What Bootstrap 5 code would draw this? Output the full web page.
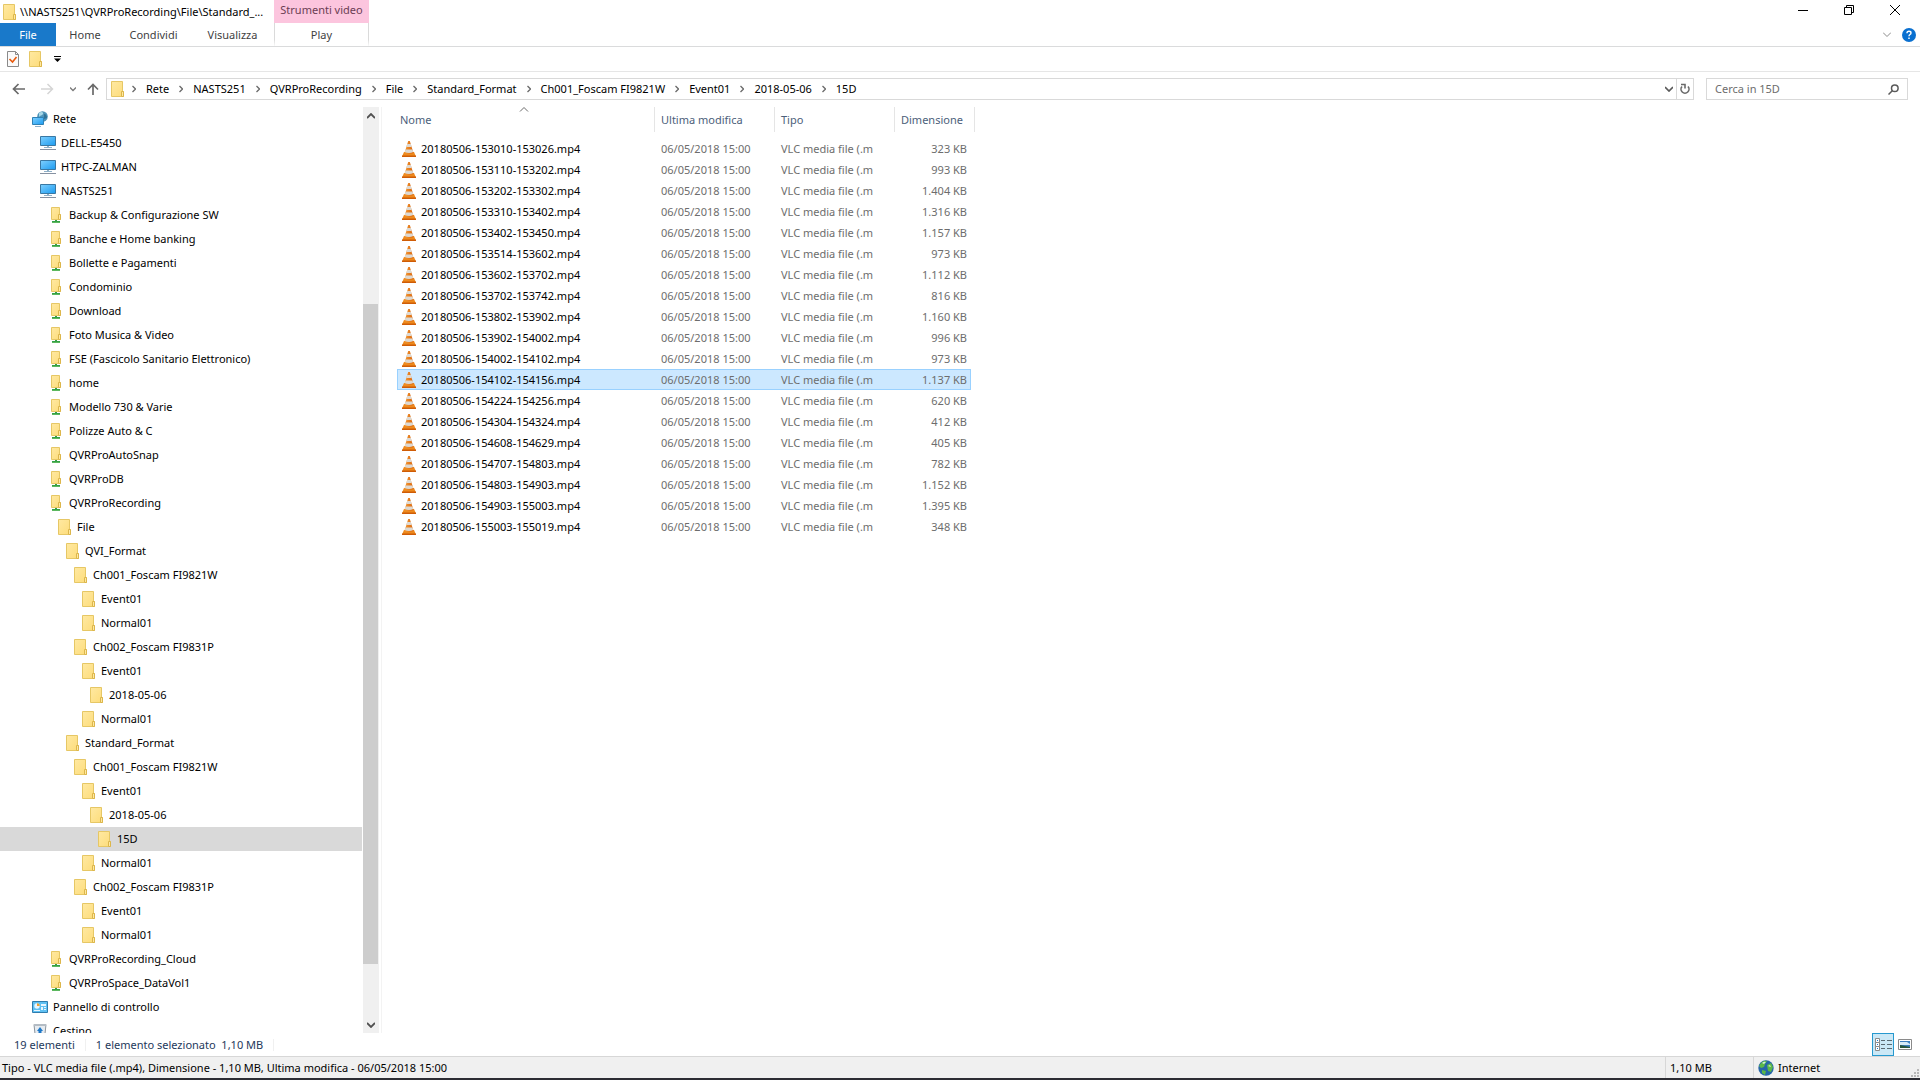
<!DOCTYPE html>
<html lang="it">
<head>
<meta charset="utf-8">
<meta name="viewport" content="width=device-width, initial-scale=1">
<title>15D</title>
<link href="https://cdn.jsdelivr.net/npm/bootstrap@5.3.0/dist/css/bootstrap.min.css" rel="stylesheet">
<style>
  body { font-family: "Noto Sans", "Open Sans", sans-serif; font-size: 11px; line-height: 16px; color: #000; background: #fff; }
  svg { display: block; flex: none; }
  button, input { font: inherit; color: inherit; }
  a { color: inherit; text-decoration: none; }
  .plain-btn { border: 0; background: none; padding: 0; display: flex; align-items: center; justify-content: center; }

  .title-row { height: 23px; }
  .title-main { width: 274px; padding-left: 1px; gap: 3px; }
  .tool-group { width: 95px; padding-bottom: 3px; background: #fcc5de; color: #6b3d54; }
  .win-group { padding-right: 2px; }
  .win-btn { width: 46px; height: 20px; }
  .ribbon-row { height: 24px; border-bottom: 1px solid #dadbdc; color: #3f3f3f; }
  .ribbon-row a { display: flex; align-items: center; justify-content: center; height: 23px; }
  .ribbon-tools { gap: 11px; }
  .tab-file { width: 56px; background: #1979ca; color: #fff; }
  .tab-home { width: 58px; }
  .tab-share { width: 79px; }
  .tab-view { width: 79px; }
  .tab-play { width: 95px; margin-left: 2px; border: 1px solid; border-width: 0 1px; border-image: linear-gradient(#dadada 70%, #fff) 1; }
  .quick-row { height: 25px; border-bottom: 1px solid #e6e6e6; padding-left: 7px; gap: 8px; }
  .quick-more { margin-left: 3px; }

  .address-row { height: 35px; padding: 0 12px 1px; }
  .address-row nav { height: 22px; border: 1px solid #d9d9d9; }
  .btn-up { margin: 0 7px 0 11px; }
  .crumbs { gap: 10px; padding-left: 7px; }
  .btn-drop { margin-right: 3px; }
  .refresh { width: 17px; height: 20px; border-left: 1px solid #d9d9d9; }
  .search-box { width: 202px; height: 22px; border: 1px solid #d9d9d9; margin-left: 12px; padding: 0 8px; }
  .search-box input { border: 0; outline: 0; padding: 0; min-width: 0; }
  .search-box input::placeholder { color: #6d6d6d; opacity: 1; }

  .tree-pane { width: 382px; border-right: 1px solid #f3f3f3; }
  .tree { width: 362px; margin-right: 1px; overflow: hidden; }
  .tree a { display: flex; align-items: center; height: 24px; gap: 5px; white-space: nowrap; }
  .tree a.current { background: #d9d9d9; }
  .scroller { width: 16px; background: #f0f0f0; }
  .scroller button { height: 17px; width: 15px; }
  .scroller .gap-top { height: 180px; }
  .scroller .thumb { height: 660px; width: 15px; background: #cdcdcd; }

  .files { table-layout: fixed; width: 578px; margin-left: 15px; border-collapse: separate; border-spacing: 0; }
  .files th { height: 25px; font-weight: 400; color: #4c607a; border-right: 1px solid #e5e5e5; padding: 0 6px; position: relative; }
  .files th:first-child { padding-left: 3px; }
  .files .sort-mark { position: absolute; left: 122px; top: 0; }
  .files tbody::before { content: ""; display: block; height: 6px; }
  .files td { height: 21px; line-height: 19px; padding: 0 6px; color: #6d6d6d; white-space: nowrap; border: 1px solid transparent; border-width: 1px 0; }
  .files td:first-child { padding-left: 5px; color: #000; }
  .files td:nth-child(4) { text-align: right; padding-right: 4px; }
  .files .picked td:nth-child(-n+4) { background: #cce8ff; border-color: #99d1ff; }
  .files .picked td:first-child { border-left-width: 1px; padding-left: 4px; }
  .files .picked td:nth-child(4) { border-right-width: 1px; padding-right: 3px; }
  .file-name { gap: 5px; }

  .count-row { height: 23px; color: #1e395b; padding-left: 14px; }
  .count-row .cell-sep { border-left: 1px solid #f0f0f0; height: 12px; margin: 0 10px; }
  .view-btn { height: 23px; width: 22px; }
  .view-btn.active { background: #cbe8f6; border: 1px solid #2699cf; }
  .info-row { height: 22px; background: #f0f0f0; border-top: 1px solid #d7d7d7; }
  .info-text { padding-left: 2px; }
  .info-size { width: 88px; border-left: 1px solid #d7d7d7; padding-left: 4px; }
  .info-zone { width: 167px; border-left: 1px solid #d7d7d7; padding-left: 4px; gap: 4px; }
  .edge { height: 2px; background: #2c2c33; }
</style>
</head>
<body class="vh-100 d-flex flex-column overflow-hidden">

<svg width="0" height="0" class="position-absolute" aria-hidden="true">
  <defs>
    <linearGradient id="gFold" x1="0" y1="0" x2="1" y2="1"><stop offset="0" stop-color="#ffe9a2"/><stop offset="1" stop-color="#fddc7a"/></linearGradient>
    <linearGradient id="gScr" x1="0" y1="0" x2="1" y2="1"><stop offset="0" stop-color="#7fd0ff"/><stop offset="1" stop-color="#1b9bf0"/></linearGradient>
    <linearGradient id="gCone" x1="0" y1="0" x2="1" y2="0"><stop offset="0" stop-color="#f59a35"/><stop offset="1" stop-color="#d9640b"/></linearGradient>
    <symbol id="folder" viewBox="0 0 16 16"><path d="M2.500.5h11v10h1v5h-12z" fill="url(#gFold)" stroke="#e6c765"/><path d="M12.500 15.500v-5h2v5z" fill="#ffe9a2" stroke="#dcb64c"/></symbol>
    <symbol id="share" viewBox="0 0 16 16"><path d="M7 12h2v2h3v2H4v-2h3z" fill="#35a045"/><path d="M3.500.5h8v7h1v5h-9z" fill="url(#gFold)" stroke="#e6c765"/><path d="M10.500 12.500v-5h2v5z" fill="#ffe9a2" stroke="#dcb64c"/><path d="M4 15h8v1H4z" fill="#5cb860"/></symbol>
    <symbol id="pc" viewBox="0 0 16 16"><path d="M.5 1.500h15v9H.5z" fill="url(#gScr)" stroke="#3a78a3"/><path d="M7 11h2v1h3v1H4v-1h3z" fill="#8fb0c8"/><path d="M0 14.500h16" stroke="#8792a2"/></symbol>
    <symbol id="network" viewBox="0 0 16 16"><circle cx="10.500" cy="5.500" r="5.300" fill="#4d93b8"/><path d="M7 2c2-2 5-1 4 1s-3 1-4 3z" fill="#a8d8e8"/><path d="M12 3c2 0 3 2 3 4l-3 1z" fill="#2f7196"/><path d="M.5 6.500h11v7H.5z" fill="url(#gScr)" stroke="#2f81b5"/><path d="M3 15.500h6" stroke="#8fb0c8"/></symbol>
    <symbol id="panel" viewBox="0 0 16 16"><path d="M.5 2.500h15v11H.5z" fill="#5fc0f2" stroke="#2f7dae"/><circle cx="5" cy="7" r="2.700" fill="#e8f6ff"/><path d="M5 7V4.300A2.700 2.700 0 0 1 7.700 7z" fill="#f0a030"/><path d="M9 5h5v2H9zM9 8h2v3H9zM12 8h2v1h-2zM12 10h2v1h-2zM2 11h6v1H2z" fill="#e8f6ff"/></symbol>
    <symbol id="bin" viewBox="0 0 16 16"><path d="M2 1.500h12l-1.500 14h-9z" fill="#e6ebf0" stroke="#8a949e"/><path d="M2 1h12v2H2z" fill="#b4bcc4"/><path d="M8 4l3 4H9.500v3h-3V8H5z" fill="#1e78c8"/></symbol>
    <symbol id="cone" viewBox="0 0 14 16"><path d="M2 11h10l2 4.500H0z" fill="#ee8a1d"/><path d="M0 14.500h14v1.500H0z" fill="#cf5c06"/><path d="M6.200 0h1.600L11.500 12q-4.500 2-9 0z" fill="url(#gCone)"/><path d="M5.200 3h3.600l.9 3H4.300zM3.500 8.500h7l.8 2.500q-4.300 2-8.600 0z" fill="#ddd9d2"/></symbol>
    <symbol id="crumb" viewBox="0 0 4 8"><path d="M.5 1l3 3-3 3" fill="none" stroke="#6a6a6a" stroke-width="1.300"/></symbol>
    <symbol id="globe" viewBox="0 0 16 16"><circle cx="8" cy="8" r="7.700" fill="#2566a8"/><path d="M3 3q3-3 6-2L7 4 6 7 3 8 1 6zM9 5l4-2 2 4-2 5-3-1zM4 10l4 1-1 4-3-2z" fill="#5cb848"/><path d="M4 3q2-2 4-1L6 4zM10 6l2-1 1 2z" fill="#d2f0d8"/></symbol>
  </defs>
</svg>

<header>
  <div class="title-row d-flex">
    <div class="title-main d-flex align-items-center text-nowrap"><svg width="16" height="16"><use href="#folder"/></svg><span>\\NASTS251\QVRProRecording\File\Standard_...</span></div>
    <div class="tool-group d-flex align-items-center justify-content-center text-nowrap">Strumenti video</div>
    <div class="win-group ms-auto d-flex">
      <button class="plain-btn win-btn" aria-label="Riduci a icona"><svg width="10" height="10"><path d="M0 5.500h10" stroke="#000"/></svg></button>
      <button class="plain-btn win-btn" aria-label="Ripristino"><svg width="10" height="10" fill="none" stroke="#000"><path d="M.5 2.500h7v7h-7zM2.500 2.500v-2h7v7h-2"/></svg></button>
      <button class="plain-btn win-btn" aria-label="Chiudi"><svg width="10" height="10"><path d="M0 0l10 10M10 0L0 10" stroke="#000"/></svg></button>
    </div>
  </div>
  <nav class="ribbon-row d-flex" aria-label="Barra multifunzione">
    <a href="#" class="tab-file">File</a><a href="#" class="tab-home">Home</a><a href="#" class="tab-share">Condividi</a><a href="#" class="tab-view">Visualizza</a><a href="#" class="tab-play">Play</a>
    <div class="ribbon-tools ms-auto d-flex align-items-center pe-1">
      <button class="plain-btn" aria-label="Espandi"><svg width="8" height="5"><path d="M0 .5l4 4 4-4" fill="none" stroke="#8a8a8a"/></svg></button>
      <button class="plain-btn rounded-circle" aria-label="Guida"><svg width="14" height="14"><circle cx="7" cy="7" r="7" fill="#0a70d0"/><path d="M5 5.200q0-2 2-2t2 1.700q0 1-1 1.600T7 8.200M7 9.500v1.500" fill="none" stroke="#fff" stroke-width="1.400"/></svg></button>
    </div>
  </nav>
  <div class="quick-row d-flex align-items-center">
    <button class="plain-btn" aria-label="Proprietà"><svg width="12" height="16"><path d="M.5.500h8l3 3v12H.5z" fill="#fafafa" stroke="#8a8a8a"/><path d="M8.500.500v3h3" fill="none" stroke="#8a8a8a"/><path d="M2.500 8l3 3 4-5" fill="none" stroke="#e8590c" stroke-width="1.600"/></svg></button>
    <button class="plain-btn" aria-label="Nuova cartella"><svg width="16" height="16"><use href="#folder"/></svg></button>
    <button class="plain-btn quick-more" aria-label="Personalizza"><svg width="7" height="6"><path d="M0 .5h7" stroke="#000"/><path d="M0 2.500h7L3.500 6z"/></svg></button>
  </div>
  <div class="address-row d-flex align-items-center">
    <button class="plain-btn" aria-label="Indietro"><svg width="13" height="12" fill="none" stroke="#6a6a6a" stroke-width="1.700"><path d="M13 6H1.500M6.500 1l-5 5 5 5"/></svg></button>
    <button class="plain-btn ms-3" aria-label="Avanti"><svg width="13" height="12" fill="none" stroke="#d5d5d5" stroke-width="1.500"><path d="M0 6h11.500M6.500 1l5 5-5 5"/></svg></button>
    <button class="plain-btn ms-3" aria-label="Percorsi recenti"><svg width="6" height="5"><path d="M0 .5l3 3 3-3" fill="none" stroke="#7a7a7a" stroke-width="1.300"/></svg></button>
    <button class="plain-btn btn-up" aria-label="Su"><svg width="12" height="12" fill="none" stroke="#6a6a6a" stroke-width="1.700"><path d="M6 12V1.500M1 6.500l5-5 5 5"/></svg></button>
    <nav class="flex-grow-1 d-flex align-items-center ps-1" aria-label="Percorso">
      <svg width="14" height="16" viewBox="2 0 14 16"><use href="#folder" width="16" height="16"/></svg>
      <div class="crumbs d-flex align-items-center text-nowrap" id="crumbs"></div>
      <button class="plain-btn btn-drop ms-auto" aria-label="Percorsi precedenti"><svg width="8" height="6"><path d="M0 1l4 4 4-4" fill="none" stroke="#5a5a5a" stroke-width="1.700"/></svg></button>
      <button class="plain-btn refresh" aria-label="Aggiorna"><svg width="10" height="12" fill="none" stroke="#6a6a6a" stroke-width="1.600"><path d="M2 3.500a4 4 0 1 0 6 0M1 1.500h4v4"/></svg></button>
    </nav>
    <form class="search-box d-flex align-items-center" onsubmit="return false">
      <input type="search" class="flex-grow-1" placeholder="Cerca in 15D" aria-label="Cerca in 15D">
      <svg width="11" height="11" fill="none" stroke="#5a5a5a" stroke-width="1.500"><circle cx="6.800" cy="4.200" r="3.300"/><path d="M4.500 6.500L.5 10.500"/></svg>
    </form>
  </div>
</header>

<main class="flex-grow-1 d-flex overflow-hidden">
  <aside class="tree-pane d-flex flex-shrink-0">
    <nav class="tree" id="tree" aria-label="Riquadro di spostamento"></nav>
    <div class="scroller d-flex flex-column">
      <button class="plain-btn" aria-label="Scorri su"><svg width="8" height="6"><path d="M0 5l4-4 4 4" fill="none" stroke="#505050" stroke-width="1.800"/></svg></button>
      <div class="gap-top"></div>
      <div class="thumb"></div>
      <button class="plain-btn mt-auto" aria-label="Scorri giù"><svg width="8" height="6"><path d="M0 1l4 4 4-4" fill="none" stroke="#505050" stroke-width="1.800"/></svg></button>
    </div>
  </aside>
  <section class="flex-grow-1">
    <table class="files">
      <colgroup><col style="width:258px"><col style="width:120px"><col style="width:120px"><col style="width:76px"><col style="width:4px"></colgroup>
      <thead><tr><th scope="col">Nome<svg class="sort-mark" width="10" height="5"><path d="M1 4.500l4-4 4 4" fill="none" stroke="#6a6a6a"/></svg></th><th scope="col">Ultima modifica</th><th scope="col">Tipo</th><th scope="col" colspan="2">Dimensione</th></tr></thead>
      <tbody id="rows"></tbody>
    </table>
  </section>
</main>

<footer>
  <div class="count-row d-flex align-items-center">
    <span>19 elementi</span><span class="cell-sep"></span><span>1 elemento selezionato&nbsp; 1,10 MB</span><span class="cell-sep"></span>
    <div class="ms-auto d-flex align-items-center gap-1 pe-2">
      <button class="plain-btn view-btn active" aria-label="Dettagli"><svg width="17" height="13" fill="none"><path d="M.5.500h4v4h-4zM.5 4.500h4v4h-4zM.5 8.500h4v4h-4z" fill="#fff" stroke="#8a8a8a"/><path d="M6 2.500h4m2 0h5M6 6.500h4m2 0h5M6 10.500h4m2 0h5" stroke="#5a6a72"/><path d="M2 2.500h1M2 6.500h1M2 10.500h1" stroke="#1979ca"/></svg></button>
      <button class="plain-btn" aria-label="Icone grandi"><svg width="14" height="11"><path d="M.5.500h13v10H.5z" fill="#fff" stroke="#8a8a8a"/><path d="M2 2h10v7H2z" fill="#3b7fc0"/><path d="M2 3h7l3 2v1H2z" fill="#d6ebf8"/><path d="M2 6l5 1 5 1v1H2z" fill="#27563c"/></svg></button>
    </div>
  </div>
  <div class="info-row d-flex">
    <div class="flex-grow-1 d-flex align-items-center info-text">Tipo - VLC media file (.mp4), Dimensione - 1,10 MB, Ultima modifica - 06/05/2018 15:00</div>
    <div class="info-size d-flex align-items-center">1,10 MB</div>
    <div class="info-zone d-flex align-items-center"><svg width="16" height="16"><use href="#globe"/></svg><span>Internet</span>
      <svg class="ms-auto align-self-end" width="10" height="10" fill="#b8b8b8"><path d="M7 1h2v2H7zM4 4h2v2H4zM7 4h2v2H7zM1 7h2v2H1zM4 7h2v2H4zM7 7h2v2H7z"/></svg></div>
  </div>
  <div class="edge"></div>
</footer>

<script>
  const crumbs = ["Rete", "NASTS251", "QVRProRecording", "File", "Standard_Format", "Ch001_Foscam FI9821W", "Event01", "2018-05-06", "15D"];
  document.getElementById("crumbs").innerHTML = crumbs.map(c =>
    `<svg width="4" height="8"><use href="#crumb"/></svg><a href="#">${c}</a>`).join("");

  // [level, icon, label]
  const tree = [
    [0, "network", "Rete"], [1, "pc", "DELL-E5450"], [1, "pc", "HTPC-ZALMAN"], [1, "pc", "NASTS251"],
    [2, "share", "Backup &amp; Configurazione SW"], [2, "share", "Banche e Home banking"], [2, "share", "Bollette e Pagamenti"],
    [2, "share", "Condominio"], [2, "share", "Download"], [2, "share", "Foto Musica &amp; Video"],
    [2, "share", "FSE (Fascicolo Sanitario Elettronico)"], [2, "share", "home"], [2, "share", "Modello 730 &amp; Varie"],
    [2, "share", "Polizze Auto &amp; C"], [2, "share", "QVRProAutoSnap"], [2, "share", "QVRProDB"], [2, "share", "QVRProRecording"],
    [3, "folder", "File"], [4, "folder", "QVI_Format"], [5, "folder", "Ch001_Foscam FI9821W"], [6, "folder", "Event01"],
    [6, "folder", "Normal01"], [5, "folder", "Ch002_Foscam FI9831P"], [6, "folder", "Event01"], [7, "folder", "2018-05-06"],
    [6, "folder", "Normal01"], [4, "folder", "Standard_Format"], [5, "folder", "Ch001_Foscam FI9821W"], [6, "folder", "Event01"],
    [7, "folder", "2018-05-06"], [8, "folder", "15D"], [6, "folder", "Normal01"], [5, "folder", "Ch002_Foscam FI9831P"],
    [6, "folder", "Event01"], [6, "folder", "Normal01"], [2, "share", "QVRProRecording_Cloud"], [2, "share", "QVRProSpace_DataVol1"],
    [0, "panel", "Pannello di controllo"], [0, "bin", "Cestino"]
  ];
  document.getElementById("tree").innerHTML = tree.map(([lv, icon, label]) =>
    `<a href="#"${label === "15D" ? ' class="current"' : ""} style="padding-left:${32 + lv * 8}px"><svg width="16" height="16"><use href="#${icon}"/></svg><span>${label}</span></a>`).join("");

  const files = [
    ["153010-153026", "323"], ["153110-153202", "993"], ["153202-153302", "1.404"], ["153310-153402", "1.316"],
    ["153402-153450", "1.157"], ["153514-153602", "973"], ["153602-153702", "1.112"], ["153702-153742", "816"],
    ["153802-153902", "1.160"], ["153902-154002", "996"], ["154002-154102", "973"], ["154102-154156", "1.137"],
    ["154224-154256", "620"], ["154304-154324", "412"], ["154608-154629", "405"], ["154707-154803", "782"],
    ["154803-154903", "1.152"], ["154903-155003", "1.395"], ["155003-155019", "348"]
  ];
  document.getElementById("rows").innerHTML = files.map(([span, kb]) =>
    `<tr${span === "154102-154156" ? ' class="picked"' : ""}><td><div class="file-name d-flex align-items-center"><svg width="14" height="16"><use href="#cone"/></svg><span>20180506-${span}.mp4</span></div></td><td>06/05/2018 15:00</td><td>VLC media file (.m</td><td>${kb} KB</td><td></td></tr>`).join("");
</script>
<script src="https://cdn.jsdelivr.net/npm/bootstrap@5.3.0/dist/js/bootstrap.bundle.min.js"></script>
</body>
</html>
